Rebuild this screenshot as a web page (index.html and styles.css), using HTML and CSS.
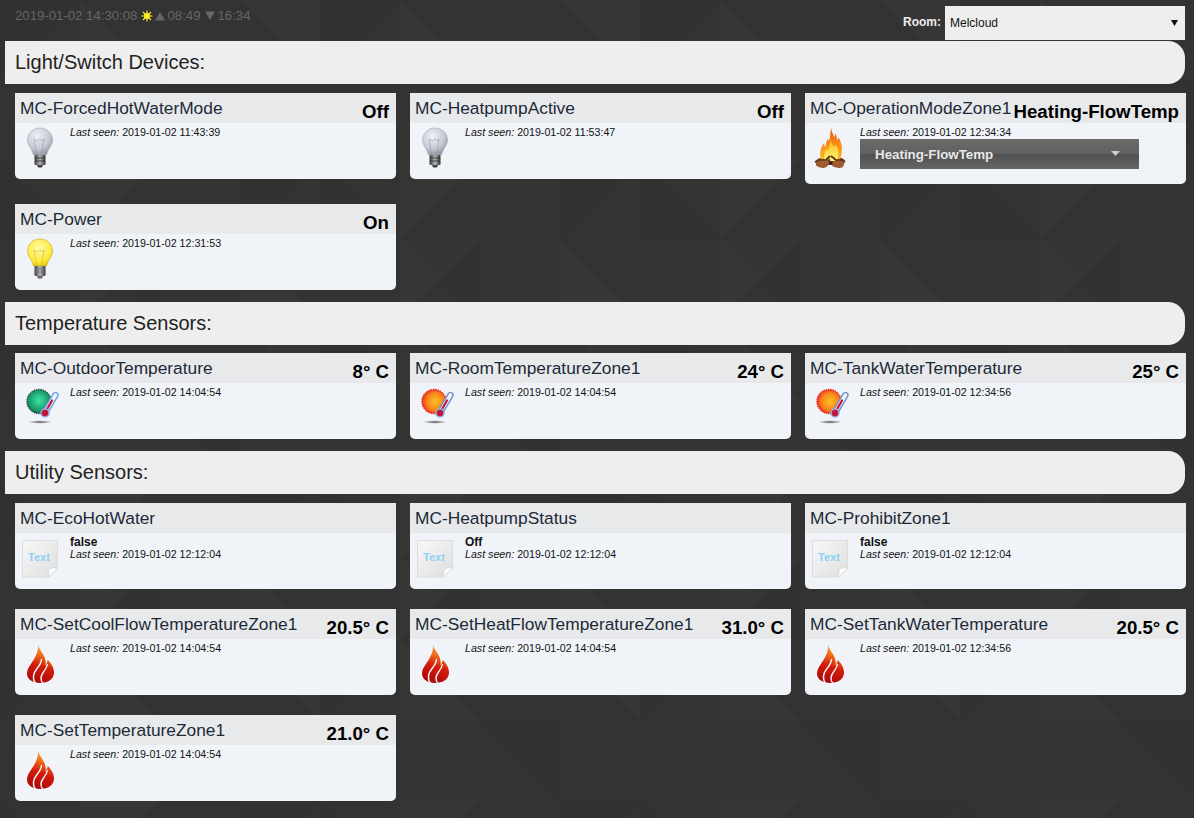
FILE: index.html
```html
<!DOCTYPE html>
<html lang="en">
<head>
<meta charset="utf-8">
<title>Melcloud</title>
<link rel="stylesheet" href="styles.css">
</head>
<body>
<svg class="defs" width="0" height="0" aria-hidden="true">
  <defs>
    <radialGradient id="g-glass" cx="0.4" cy="0.3" r="0.8"><stop offset="0" stop-color="#eef1f6"/><stop offset="0.6" stop-color="#c3c8d3"/><stop offset="1" stop-color="#7f8591"/></radialGradient>
    <radialGradient id="g-yellow" cx="0.45" cy="0.35" r="0.75"><stop offset="0" stop-color="#fffbb0"/><stop offset="0.65" stop-color="#fdea3c"/><stop offset="1" stop-color="#d9b800"/></radialGradient>
    <linearGradient id="g-base" x1="0" x2="1" y1="0" y2="0"><stop offset="0" stop-color="#3a3a3a"/><stop offset="0.5" stop-color="#b5b5b5"/><stop offset="1" stop-color="#2f2f2f"/></linearGradient>
    <radialGradient id="g-green" cx="0.5" cy="0.45" r="0.6"><stop offset="0" stop-color="#3fe3a6"/><stop offset="0.7" stop-color="#1a9a68"/><stop offset="1" stop-color="#0f5a45"/></radialGradient>
    <radialGradient id="g-red" cx="0.55" cy="0.5" r="0.6"><stop offset="0" stop-color="#ffc21f"/><stop offset="0.6" stop-color="#f7831c"/><stop offset="1" stop-color="#ea1c1c"/></radialGradient>
    <linearGradient id="g-flame" x1="0.3" x2="0.55" y1="1" y2="0"><stop offset="0" stop-color="#a80808"/><stop offset="0.45" stop-color="#d41a0c"/><stop offset="0.75" stop-color="#f0701a"/><stop offset="1" stop-color="#f9a030"/></linearGradient>
    <linearGradient id="g-fire" x1="0" x2="0" y1="1" y2="0"><stop offset="0" stop-color="#fdb51e"/><stop offset="0.5" stop-color="#f98a16"/><stop offset="1" stop-color="#ea4a12"/></linearGradient>
    <linearGradient id="g-fire-in" x1="0" x2="0" y1="1" y2="0"><stop offset="0" stop-color="#fff27a"/><stop offset="1" stop-color="#ffc21f"/></linearGradient>
    <linearGradient id="g-doc" x1="0" x2="1" y1="0" y2="1"><stop offset="0" stop-color="#f8f8f8"/><stop offset="1" stop-color="#dedede"/></linearGradient>
    <radialGradient id="g-shadow"><stop offset="0" stop-color="#555"/><stop offset="1" stop-color="#555" stop-opacity="0"/></radialGradient>

    <symbol id="i-bulb-off" viewBox="0 0 44 44">
      <path d="M19 2c7 0 12.500 5.400 12.500 12 0 5.500-4.500 8.500-6 15h-13c-1.500-6.500-6-9.500-6-15C6.500 7.400 12 2 19 2z" fill="url(#g-glass)" stroke="#a5a9b2" stroke-width=".6"/>
      <path d="M15.500 28 13 13m10 0-2.500 15M13 13l3 2 3-2 3 2 1-2" fill="none" stroke="#8d929c" stroke-width=".5"/>
      <rect x="13.500" y="29" width="11" height="10" rx="1" fill="url(#g-base)"/>
      <path d="M14 32h10M14 35h10" stroke="#222" stroke-width=".7"/>
      <path d="M16 39h6l-1 2.500h-4z" fill="#444"/>
    </symbol>
    <symbol id="i-bulb-on" viewBox="0 0 44 44">
      <path d="M19 2c7 0 12.500 5.400 12.500 12 0 5.500-4.500 8.500-6 15h-13c-1.500-6.500-6-9.500-6-15C6.500 7.400 12 2 19 2z" fill="url(#g-yellow)" stroke="#c9a90a" stroke-width=".6"/>
      <path d="M15.500 28 13 13m10 0-2.500 15M13 13l3 2 3-2 3 2 1-2" fill="none" stroke="#c5ac23" stroke-width=".5"/>
      <rect x="13.500" y="29" width="11" height="10" rx="1" fill="url(#g-base)"/>
      <path d="M14 32h10M14 35h10" stroke="#777" stroke-width=".7"/>
      <path d="M16 39h6l-1 2.500h-4z" fill="#666"/>
    </symbol>
    <symbol id="i-fire" viewBox="0 0 44 44">
      <path d="M3.500 35.500c3-3 8-5 16.500-5s13.500 2 14.500 5c-1 2.500-4 3.500-7 3.500H10c-3 0-5.500-1-6.500-3.500z" fill="#6e3a1c"/>
      <path d="M20 2c.5 4 2.500 6 3 9 1-1 1.500-2.500 1.500-4 1 3 1.500 5 1.500 7 1-.5 1.500-1.500 1.500-3 2 4 3.500 8 3.500 12 0 4-1 7-2 10H10c-1-3-1-5-.5-8 .3-3 2-6 3.500-8 0 2 .5 3 1.500 4 .5-4 1-6 2.500-8.500.5 1 .8 2 1 3 1-4 1.500-8 2-14.500z" fill="url(#g-fire)"/>
      <path d="M20 15c1 3 2 4 3 6 .5-1 1-2 1-3 2 3 3.500 6 3.500 9 0 3-1 5.500-2 8H14.500c-1.500-3-1.500-5-1-8 .3-2 1.500-3 2.500-4.500 0 1 .5 2 1 2.500.5-3 2-6 3-10z" fill="url(#g-fire-in)"/>
      <path d="M13 36c2-2 4-4 6-6M27 36c-2-2-4-4-7-6M16 36c1-1 2-2 3-2" fill="none" stroke="#5a2f14" stroke-width="1.800"/>
      <path d="M5 36.500c3-1.500 8-2.500 13-1.500 1 2.500-1 6-5 7-3 .2-6-1-8-2.500zM21 35.500c4-1 8-1 12 .5.800 2.500-1 6-4 6-3 0-7-1-8-2.500z" fill="#9c5c30"/>
      <path d="M18 35.500h3.500v3H18z" fill="#3c1e0e"/>
    </symbol>
    <symbol id="i-temp-cold" viewBox="0 0 44 44">
      <ellipse cx="19" cy="36" rx="12" ry="1.800" fill="url(#g-shadow)"/>
      <circle cx="18" cy="15.500" r="12" fill="url(#g-green)" stroke="#1c4a3a" stroke-width="1.400" stroke-dasharray="1.300 1"/>
      <path d="M34.500 9 25 25" stroke="#6f9fe0" stroke-width="6.400" stroke-linecap="round"/>
      <path d="M34.500 9 25 25" stroke="#eef3fb" stroke-width="3.600" stroke-linecap="round"/>
      <path d="M31 14.500 25 25" stroke="#c3163f" stroke-width="2.200" stroke-linecap="round"/>
      <circle cx="24" cy="27" r="4" fill="#c3163f" stroke="#8fb3e0" stroke-width="1.500"/>
    </symbol>
    <symbol id="i-temp-hot" viewBox="0 0 44 44">
      <ellipse cx="19" cy="36" rx="12" ry="1.800" fill="url(#g-shadow)"/>
      <circle cx="18" cy="15.500" r="12" fill="url(#g-red)" stroke="#ee1c1c" stroke-width="1.400" stroke-dasharray="1.300 1"/>
      <path d="M34.500 9 25 25" stroke="#6f8fc8" stroke-width="6.400" stroke-linecap="round"/>
      <path d="M34.500 9 25 25" stroke="#eef3fb" stroke-width="3.600" stroke-linecap="round"/>
      <path d="M31 14.500 25 25" stroke="#c3163f" stroke-width="2.200" stroke-linecap="round"/>
      <circle cx="24" cy="27" r="4" fill="#c3163f" stroke="#8fb3e0" stroke-width="1.500"/>
    </symbol>
    <symbol id="i-text" viewBox="0 0 44 44">
      <path d="M1.500 4.500h35V32l-9 9h-26z" fill="url(#g-doc)" stroke="#d8d8d8" stroke-width=".8"/>
      <path d="M36.500 32c-4-.5-7 0-8 1.500-.7 1-.8 4-1 7.500z" fill="#fff" stroke="#cfcfcf" stroke-width=".7"/>
      <text x="18" y="25" class="doc-label" text-anchor="middle">Text</text>
    </symbol>
    <symbol id="i-flame" viewBox="0 0 44 44">
      <path d="M17 3c1 5 6.500 9 7.500 15.500.3 2 .2 3.500 0 5 1-2 2-3.500 2.300-5.500 3.500 3.500 6.200 7.500 6.200 12.500 0 6.500-6 10.500-14 10.500-7 0-13-3.500-13-9.500 0-5 3.500-8.500 6.500-13.500C15 14 17.500 9 17 3z" fill="url(#g-flame)"/>
      <path d="M14.500 41.500c-3.500-5-2.500-10 1.500-15 2.500-3 4.500-5.500 4.500-9.500" fill="none" stroke="#f0f4f9" stroke-width="1.500"/>
      <path d="M22 41.500c-3-3.500-2.500-7.500.5-11.500 2-2.500 3.500-5 4-8" fill="none" stroke="#f0f4f9" stroke-width="1.400"/>
    </symbol>
  </defs>
</svg>

<header class="topbar">
  <div class="clock">
    <span>2019-01-02 14:30:08</span>
    <svg class="sun" width="12" height="12" viewBox="0 0 12 12"><circle cx="6" cy="6" r="3" fill="#ffee22"/><path d="M6 .5v11M.5 6h11M2 2l8 8M10 2l-8 8" stroke="#ffee22" stroke-width="1.100"/></svg>
    <svg class="tri" width="10" height="10" viewBox="0 0 10 10"><path d="M5 1l5 8.500H0z"/></svg><span>08:49</span>
    <svg class="tri tri-down" width="10" height="10" viewBox="0 0 10 10"><path d="M0 .5h10L5 9z"/></svg><span>16:34</span>
  </div>
  <div class="room">
    <label class="room-label" for="room">Room:</label>
    <select id="room" class="room-select"><option>Melcloud</option></select>
  </div>
</header>

<main>
  <section class="group">
    <h2 class="group-title">Light/Switch Devices:</h2>
    <div class="cards">
      <article class="card">
        <div class="card-head"><span class="name">MC-ForcedHotWaterMode</span><span class="value">Off</span></div>
        <div class="card-body"><svg class="icon"><use href="#i-bulb-off"/></svg><div class="info"><p class="seen"><i>Last seen:</i> 2019-01-02 11:43:39</p></div></div>
      </article>
      <article class="card">
        <div class="card-head"><span class="name">MC-HeatpumpActive</span><span class="value">Off</span></div>
        <div class="card-body"><svg class="icon"><use href="#i-bulb-off"/></svg><div class="info"><p class="seen"><i>Last seen:</i> 2019-01-02 11:53:47</p></div></div>
      </article>
      <article class="card">
        <div class="card-head"><span class="name">MC-OperationModeZone1</span><span class="value">Heating-FlowTemp</span></div>
        <div class="card-body card-body-tall"><svg class="icon"><use href="#i-fire"/></svg><div class="info"><p class="seen"><i>Last seen:</i> 2019-01-02 12:34:34</p><select class="mode"><option>Heating-FlowTemp</option></select></div></div>
      </article>
      <article class="card">
        <div class="card-head"><span class="name">MC-Power</span><span class="value">On</span></div>
        <div class="card-body"><svg class="icon"><use href="#i-bulb-on"/></svg><div class="info"><p class="seen"><i>Last seen:</i> 2019-01-02 12:31:53</p></div></div>
      </article>
    </div>
  </section>

  <section class="group group-tight">
    <h2 class="group-title">Temperature Sensors:</h2>
    <div class="cards">
      <article class="card">
        <div class="card-head"><span class="name">MC-OutdoorTemperature</span><span class="value">8° C</span></div>
        <div class="card-body"><svg class="icon"><use href="#i-temp-cold"/></svg><div class="info"><p class="seen"><i>Last seen:</i> 2019-01-02 14:04:54</p></div></div>
      </article>
      <article class="card">
        <div class="card-head"><span class="name">MC-RoomTemperatureZone1</span><span class="value">24° C</span></div>
        <div class="card-body"><svg class="icon"><use href="#i-temp-hot"/></svg><div class="info"><p class="seen"><i>Last seen:</i> 2019-01-02 14:04:54</p></div></div>
      </article>
      <article class="card">
        <div class="card-head"><span class="name">MC-TankWaterTemperature</span><span class="value">25° C</span></div>
        <div class="card-body"><svg class="icon"><use href="#i-temp-hot"/></svg><div class="info"><p class="seen"><i>Last seen:</i> 2019-01-02 12:34:56</p></div></div>
      </article>
    </div>
  </section>

  <section class="group">
    <h2 class="group-title">Utility Sensors:</h2>
    <div class="cards">
      <article class="card">
        <div class="card-head"><span class="name">MC-EcoHotWater</span></div>
        <div class="card-body"><svg class="icon"><use href="#i-text"/></svg><div class="info info-text"><p class="state">false</p><p class="seen"><i>Last seen:</i> 2019-01-02 12:12:04</p></div></div>
      </article>
      <article class="card">
        <div class="card-head"><span class="name">MC-HeatpumpStatus</span></div>
        <div class="card-body"><svg class="icon"><use href="#i-text"/></svg><div class="info info-text"><p class="state">Off</p><p class="seen"><i>Last seen:</i> 2019-01-02 12:12:04</p></div></div>
      </article>
      <article class="card">
        <div class="card-head"><span class="name">MC-ProhibitZone1</span></div>
        <div class="card-body"><svg class="icon"><use href="#i-text"/></svg><div class="info info-text"><p class="state">false</p><p class="seen"><i>Last seen:</i> 2019-01-02 12:12:04</p></div></div>
      </article>
      <article class="card">
        <div class="card-head"><span class="name">MC-SetCoolFlowTemperatureZone1</span><span class="value">20.5° C</span></div>
        <div class="card-body"><svg class="icon"><use href="#i-flame"/></svg><div class="info"><p class="seen"><i>Last seen:</i> 2019-01-02 14:04:54</p></div></div>
      </article>
      <article class="card">
        <div class="card-head"><span class="name">MC-SetHeatFlowTemperatureZone1</span><span class="value">31.0° C</span></div>
        <div class="card-body"><svg class="icon"><use href="#i-flame"/></svg><div class="info"><p class="seen"><i>Last seen:</i> 2019-01-02 14:04:54</p></div></div>
      </article>
      <article class="card">
        <div class="card-head"><span class="name">MC-SetTankWaterTemperature</span><span class="value">20.5° C</span></div>
        <div class="card-body"><svg class="icon"><use href="#i-flame"/></svg><div class="info"><p class="seen"><i>Last seen:</i> 2019-01-02 12:34:56</p></div></div>
      </article>
      <article class="card">
        <div class="card-head"><span class="name">MC-SetTemperatureZone1</span><span class="value">21.0° C</span></div>
        <div class="card-body"><svg class="icon"><use href="#i-flame"/></svg><div class="info"><p class="seen"><i>Last seen:</i> 2019-01-02 14:04:54</p></div></div>
      </article>
    </div>
  </section>
</main>
</body>
</html>
```
FILE: styles.css
```css
* { box-sizing: border-box; }

html, body { height: 100%; }

body {
  margin: 0;
  overflow: hidden;
  font-family: "Liberation Sans", Arial, sans-serif;
  color: #222;
  background-color: #333;
  background-image: url("data:image/svg+xml,%3Csvg xmlns='http://www.w3.org/2000/svg' width='320' height='320'%3E%3Cg fill='%23000' fill-opacity='.035'%3E%3Cpath d='M0 0h80L0 80zM160 80h80v80zM240 160h80l-80 80zM80 240h80v80zM0 160l80 80H0z'/%3E%3C/g%3E%3Cg fill='%23fff' fill-opacity='.015'%3E%3Cpath d='M80 0l80 80H80zM240 0h80v80zM80 160h80l-80 80zM240 240l80 80h-80zM160 240l-80 80 0-80z'/%3E%3C/g%3E%3C/svg%3E");
}

.defs { position: absolute; }

.doc-label { font: bold 11px "Liberation Sans", Arial, sans-serif; fill: #8bd3f3; }

.topbar {
  height: 41px;
  display: flex;
  justify-content: space-between;
  padding: 6px 9px 0 15px;
}

.clock {
  display: flex;
  align-items: center;
  height: 19px;
  font-size: 13.2px;
  color: #666;
  white-space: pre;
}

.sun { margin: 0 2px 0 4px; }
.tri { fill: #666; margin-right: 2px; flex: none; }
.tri-down { margin-left: 5px; }

.room { display: flex; align-items: flex-start; }

.room-label {
  color: #eee;
  font-size: 12px;
  font-weight: bold;
  margin: 9px 4px 0 0;
}

.room-select {
  appearance: none;
  -webkit-appearance: none;
  width: 240px;
  height: 34px;
  border: 0;
  border-radius: 0;
  padding: 0 5px;
  font: 12px "Liberation Sans", Arial, sans-serif;
  color: #111;
  background: #eee url("data:image/svg+xml,%3Csvg xmlns='http://www.w3.org/2000/svg' width='7' height='6'%3E%3Cpath d='M0 0h7L3.500 6z' fill='%23111'/%3E%3C/svg%3E") no-repeat right 7px center;
}

.group { margin-bottom: 12px; }

.group-title {
  margin: 0 9px 9px 5px;
  height: 43px;
  padding-left: 10px;
  background: #eee;
  border-radius: 0 17px 17px 0;
  font-size: 20px;
  font-weight: normal;
  line-height: 42px;
  color: #222;
}

.group-tight .group-title { margin-bottom: 8px; }

.cards {
  display: flex;
  flex-wrap: wrap;
  align-items: flex-start;
  gap: 20px 14px;
  padding-left: 15px;
}

.card {
  width: 381px;
  background: #f0f4f9;
  border-radius: 0 0 5px 5px;
  overflow: hidden;
}

.card-head {
  height: 30px;
  padding: 0 7px 0 5px;
  background: #e8e9eb;
  display: flex;
  justify-content: space-between;
  align-items: flex-start;
  white-space: nowrap;
}

.name {
  font-size: 17.33px;
  line-height: 31px;
  color: #1c2a38;
}

.value {
  font-size: 18.67px;
  font-weight: bold;
  line-height: 37px;
  color: #000;
}

.card-body {
  height: 56px;
  display: flex;
}

.card-body-tall { height: 61px; }

.icon {
  width: 44px;
  height: 44px;
  margin: 3px 5px 0 6px;
  flex: none;
}

.info { font-size: 10.67px; color: #111; padding-top: 3px; }
.info-text { padding-top: 4px; }

.info p { margin: 0; }
.seen { line-height: 12px; }
.state { font-size: 12px; font-weight: bold; line-height: 11px; }

.mode {
  appearance: none;
  -webkit-appearance: none;
  display: block;
  width: 279px;
  height: 30px;
  margin-top: 1px;
  border: 0;
  border-radius: 0;
  padding: 0 15px;
  font: bold 13.33px "Liberation Sans", Arial, sans-serif;
  color: #e8e8e8;
  background:
    url("data:image/svg+xml,%3Csvg xmlns='http://www.w3.org/2000/svg' width='9' height='5'%3E%3Cpath d='M0 0h9L4.500 5z' fill='%23ccc'/%3E%3C/svg%3E") no-repeat 251px 12px,
    linear-gradient(#6a6a6a 0, #606060 50%, #505050 51%, #666 100%);
}
```
